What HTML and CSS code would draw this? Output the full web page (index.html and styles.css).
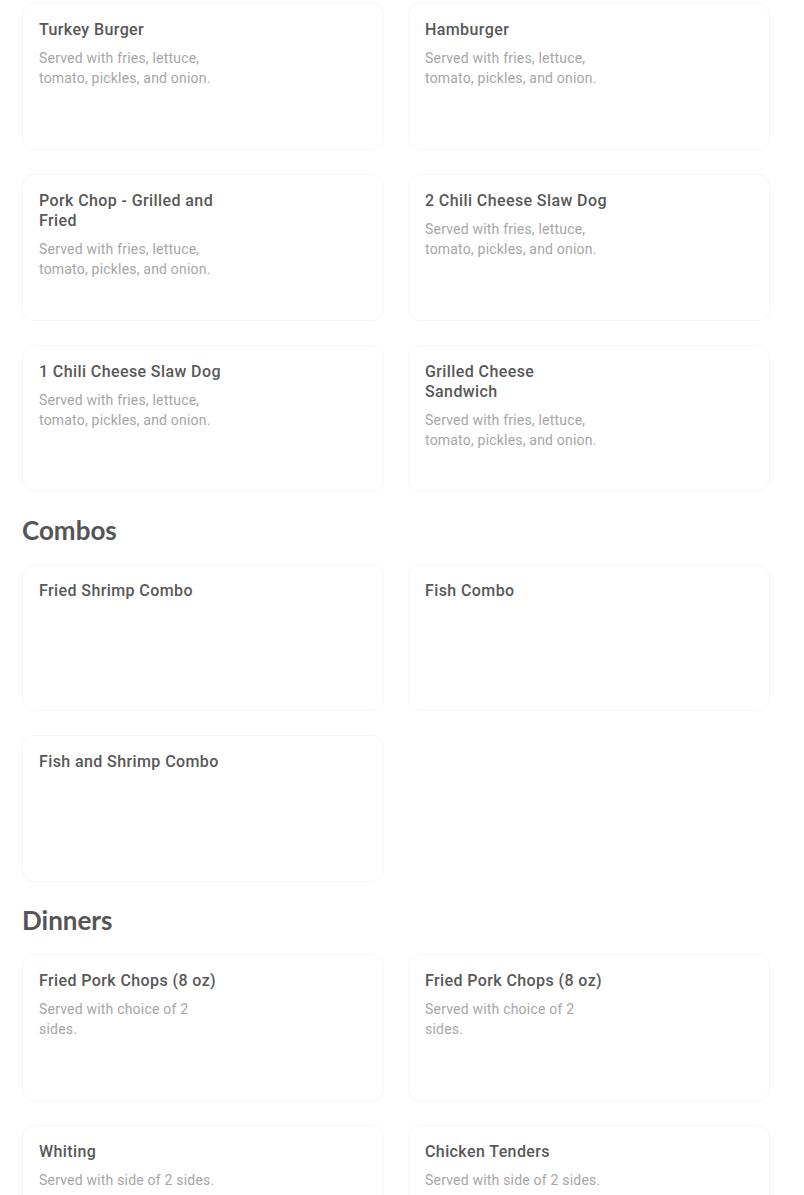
FILE: index.html
```html
<!DOCTYPE html>
<html lang="en">
<head>
    <meta charset="UTF-8">
    <meta name="viewport" content="width=device-width, initial-scale=1.0">
    <title>Menu</title>
    <link rel="stylesheet" href="styles.css">
</head>
<body>
    <div class="menu">
        <div class="grid">
            <div class="card">
                <div class="name">Turkey Burger</div>
                <div class="desc">Served with fries, lettuce, tomato, pickles, and onion.</div>
            </div>
            <div class="card">
                <div class="name">Hamburger</div>
                <div class="desc">Served with fries, lettuce, tomato, pickles, and onion.</div>
            </div>
            <div class="card">
                <div class="name">Pork Chop - Grilled and Fried</div>
                <div class="desc">Served with fries, lettuce, tomato, pickles, and onion.</div>
            </div>
            <div class="card">
                <div class="name">2 Chili Cheese Slaw Dog</div>
                <div class="desc">Served with fries, lettuce, tomato, pickles, and onion.</div>
            </div>
            <div class="card">
                <div class="name">1 Chili Cheese Slaw Dog</div>
                <div class="desc">Served with fries, lettuce, tomato, pickles, and onion.</div>
            </div>
            <div class="card">
                <div class="name">Grilled Cheese Sandwich</div>
                <div class="desc">Served with fries, lettuce, tomato, pickles, and onion.</div>
            </div>
        </div>

        <h2 class="section-title">Combos</h2>
        <div class="grid">
            <div class="card">
                <div class="name">Fried Shrimp Combo</div>
            </div>
            <div class="card">
                <div class="name">Fish Combo</div>
            </div>
            <div class="card">
                <div class="name">Fish and Shrimp Combo</div>
            </div>
        </div>

        <h2 class="section-title">Dinners</h2>
        <div class="grid">
            <div class="card">
                <div class="name">Fried Pork Chops (8 oz)</div>
                <div class="desc">Served with choice of 2 sides.</div>
            </div>
            <div class="card">
                <div class="name">Fried Pork Chops (8 oz)</div>
                <div class="desc">Served with choice of 2 sides.</div>
            </div>
            <div class="card">
                <div class="name">Whiting</div>
                <div class="desc">Served with side of 2 sides.</div>
            </div>
            <div class="card">
                <div class="name">Chicken Tenders</div>
                <div class="desc">Served with side of 2 sides.</div>
            </div>
        </div>
    </div>
</body>
</html>
```

FILE: styles.css
```css
body {
    margin: 0;
    font-family: Roboto, "Liberation Sans", sans-serif;
    background-color: #fff;
}
.menu {
    width: 748px;
    padding: 3px 0 0 22px;
}
.grid {
    display: grid;
    grid-template-columns: 1fr 1fr;
    column-gap: 24px;
    row-gap: 24px;
}
.card {
    height: 147px;
    box-sizing: border-box;
    padding: 16px 16px;
    border: 1px solid #f5f5f5;
    border-radius: 12px;
}
.name {
    max-width: 184px;
    font-size: 16px;
    line-height: 20px;
    font-weight: 500;
    letter-spacing: 0.4px;
    color: #585858;
}
.desc {
    max-width: 176px;
    margin-top: 8px;
    font-size: 14px;
    line-height: 20px;
    letter-spacing: 0.2px;
    color: #a6a6a6;
}
.section-title {
    margin: 22px 0 18px;
    font-family: Lato, "Open Sans", sans-serif;
    font-size: 26px;
    line-height: 32px;
    font-weight: 700;
    color: #555;
}
```
